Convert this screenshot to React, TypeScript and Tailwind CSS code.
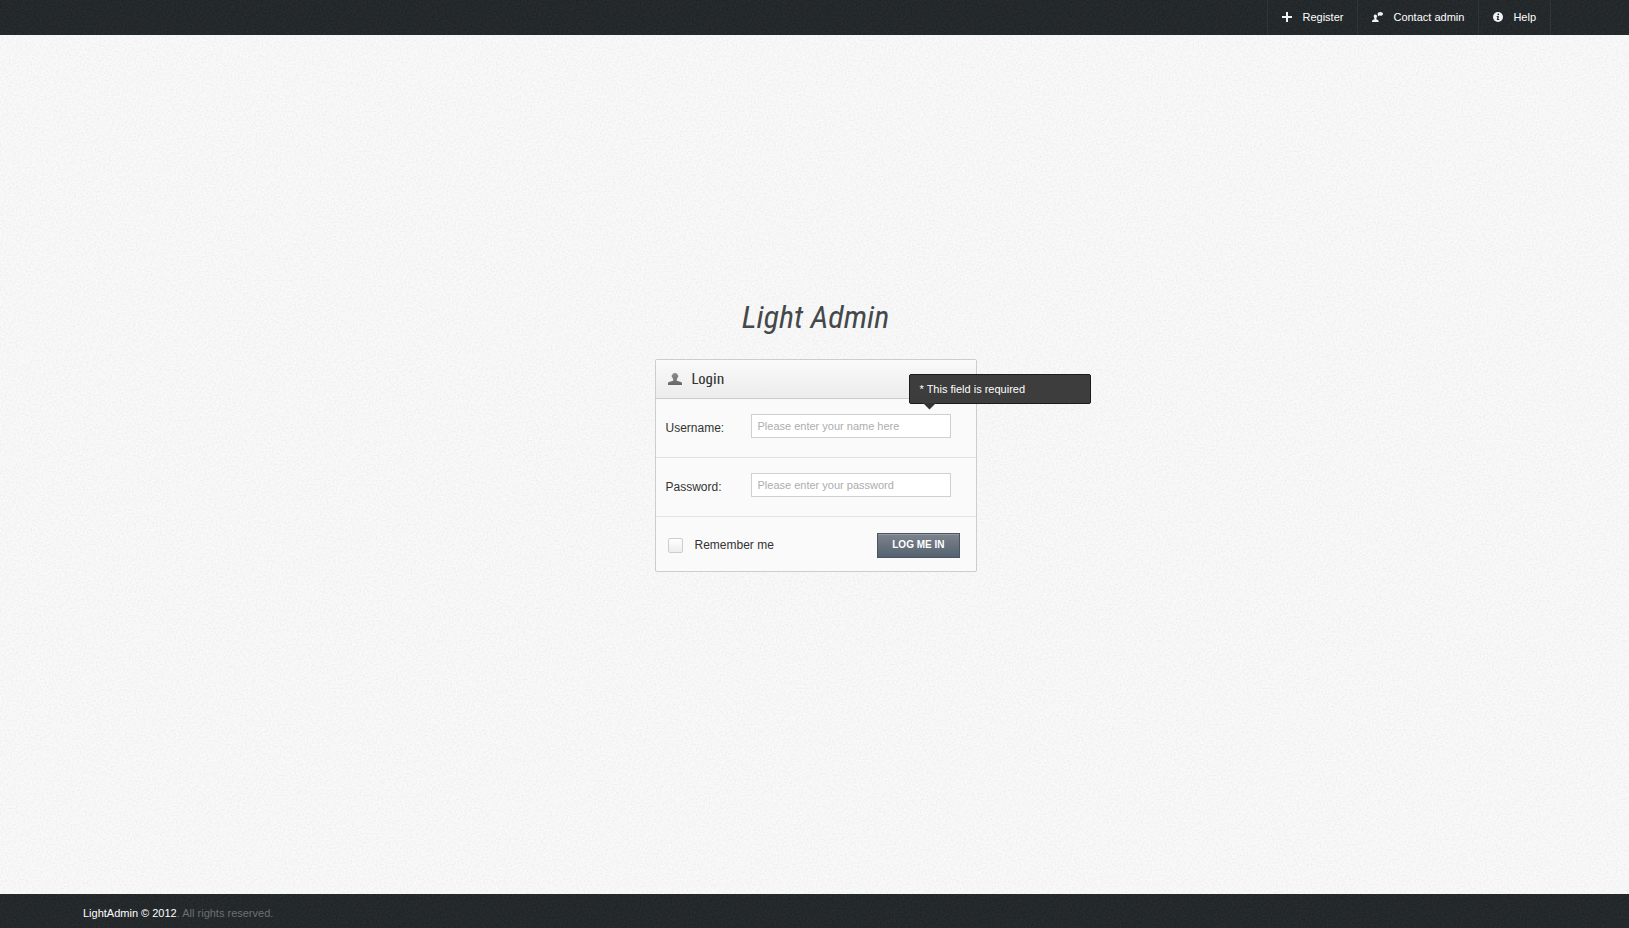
import type { ReactNode } from "react";

function Grain({ id, tone }: { id: string; tone: "light" | "dark" }) {
  const matrix =
    tone === "light"
      ? "0 0 0 0 0  0 0 0 0 0  0 0 0 0 0  0.09 0 0 0 -0.034"
      : "0 0 0 0 0  0 0 0 0 0  0 0 0 0 0  0.4 0 0 0 -0.12";
  return (
    <svg aria-hidden="true" className="pointer-events-none absolute inset-0 h-full w-full">
      <filter id={id} x="0" y="0" width="100%" height="100%">
        <feTurbulence type="fractalNoise" baseFrequency="0.55" numOctaves="2" stitchTiles="stitch" />
        <feColorMatrix type="matrix" values={matrix} />
      </filter>
      <rect width="100%" height="100%" filter={`url(#${id})`} />
    </svg>
  );
}

function PlusIcon() {
  return (
    <svg aria-hidden="true" width="10" height="10" viewBox="0 0 10 10" fill="#f2f2f2">
      <path d="M4 0h2v4h4v2H6v4H4V6H0V4h4z" />
    </svg>
  );
}

function ContactIcon() {
  return (
    <svg aria-hidden="true" width="11" height="10" viewBox="0 0 11 10" fill="#f2f2f2">
      <path d="M3.4 2.6c1.1 0 1.7.8 1.6 1.9-.1.8-.5 1.3-.6 1.7 0 .9 0 1.2.4 1.4 1.1.4 1.9.7 1.9 2.4H0C0 8.3.8 8 1.9 7.6c.5-.2.5-.5.5-1.4-.2-.4-.6-.9-.7-1.7-.1-1.1.6-1.9 1.7-1.9z" />
      <path d="M8.3 0C9.8 0 11 .8 11 1.9S9.8 3.7 8.3 3.7c-.4 0-.7 0-1-.1L5.7 4.6l.3-1.5C5.7 2.8 5.6 2.3 5.6 1.9 5.6.8 6.8 0 8.3 0z" />
    </svg>
  );
}

function InfoIcon() {
  return (
    <svg aria-hidden="true" width="10" height="10" viewBox="0 0 10 10">
      <circle cx="5" cy="5" r="5" fill="#f2f2f2" />
      <circle cx="5.3" cy="2.3" r="0.9" fill="#252a2d" />
      <path d="M3.7 4h2.2L5.4 7h.8v1H3.8l.6-3h-.7z" fill="#252a2d" />
    </svg>
  );
}

function UserIcon() {
  return (
    <svg aria-hidden="true" width="14" height="12" viewBox="0 0 14 12">
      <defs>
        <linearGradient id="userFill" x1="0" y1="0" x2="0" y2="1">
          <stop offset="0" stopColor="#8d8d8d" />
          <stop offset="1" stopColor="#666" />
        </linearGradient>
      </defs>
      <path
        fill="url(#userFill)"
        d="M7 0c1.5 0 2.6.8 2.7 2 .6.2.7.9.6 1.4-.1.5-.3.8-.6.9C9.5 5.3 9.1 6 8.7 6.4v1.2c.5.7 4.9.8 5.3 2.7V12H0v-1.7c.4-1.9 4.8-2 5.3-2.7V6.4C4.9 6 4.5 5.3 4.3 4.3c-.3-.1-.5-.4-.6-.9-.1-.5 0-1.2.6-1.4C4.4.8 5.5 0 7 0z"
      />
    </svg>
  );
}

function NavItem({ icon, children }: { icon: ReactNode; children: ReactNode }) {
  return (
    <li className="border-l border-[#2f3437] last:border-r">
      <a href="#" className="flex h-full items-center gap-2.5 px-3.5 pb-0.5 text-[11px] leading-4 text-white">
        {icon}
        {children}
      </a>
    </li>
  );
}

function Field({ id, label, type, hint, children }: { id: string; label: string; type: string; hint: string; children?: ReactNode }) {
  return (
    <div className="flex items-start border-b border-[#e2e2e2] pt-[15px] pr-[25px] pb-[19px] pl-2.5">
      <label htmlFor={id} className="w-[85px] pt-1 text-[12px] leading-5 text-[#333]">
        {label}
      </label>
      <div className="relative flex flex-1">
        <input
          id={id}
          type={type}
          placeholder={hint}
          className="h-6 w-full min-w-0 border border-[#d0d0d0] bg-white px-1.5 text-[11px] text-[#555] outline-none placeholder:text-[#adadad]"
        />
        {children}
      </div>
    </div>
  );
}

export default function App() {
  return (
    <div className="relative isolate flex min-h-screen flex-col overflow-hidden bg-[#f9f9f9] font-['Liberation_Sans',Arial,sans-serif]">
      <Grain id="paper" tone="light" />

      <header className="relative bg-[#272c2f]">
        <Grain id="topGrain" tone="dark" />
        <nav className="relative flex justify-end pr-[78px]">
          <ul className="flex h-[35px]">
            <NavItem icon={<PlusIcon />}>Register</NavItem>
            <NavItem icon={<ContactIcon />}>Contact admin</NavItem>
            <NavItem icon={<InfoIcon />}>Help</NavItem>
          </ul>
        </nav>
      </header>

      <main className="relative flex flex-1 flex-col items-center justify-center pb-[62px] pl-0.5">
        <h1 className="pb-5 font-['Segoe_Script','Bradley_Hand','Roboto_Condensed',Lato,cursive] text-[32px] leading-[44px] text-[#44484b] italic">
          Light Admin
        </h1>

        <form className="w-[322px] rounded-xs border border-[#cdcdcd] bg-[#fafafa]" onSubmit={(e) => e.preventDefault()}>
          <div className="flex h-[39px] items-center gap-2.5 border-b border-[#cdcdcd] bg-linear-to-b from-[#fafafa] to-[#ececec] px-3">
            <UserIcon />
            <h2 className="font-[Cuprum,'Roboto_Condensed',Roboto,sans-serif] text-[16px] leading-5 text-[#333]">Login</h2>
          </div>

          <Field id="username" label="Username:" type="text" hint="Please enter your name here">
            <div
              role="alert"
              className="absolute -top-10 left-[158px] flex h-[30px] w-[182px] items-center rounded-xs border border-[#1c1c1c] bg-[#333]/95 px-2.5 text-[11px] text-white"
            >
              * This field is required
              <svg aria-hidden="true" className="absolute top-full left-[13px]" width="13" height="7" viewBox="0 0 13 7">
                <path d="M0 0h13L6.5 6.5z" fill="#333" />
              </svg>
            </div>
          </Field>
          <Field id="password" label="Password:" type="password" hint="Please enter your password" />

          <div className="flex h-[54px] items-center justify-between pt-0.5 pr-4 pl-3">
            <label className="flex items-center gap-3 text-[12px] leading-5 text-[#333]">
              <input
                type="checkbox"
                className="size-[15px] appearance-none rounded-xs border border-[#cdcdcd] bg-linear-to-b from-white to-[#ededed]"
              />
              Remember me
            </label>
            <button
              type="submit"
              className="h-[25px] border border-[#4b5561] bg-linear-to-b from-[#7d838c] to-[#546270] px-3.5 text-[10px] leading-4 font-bold text-white uppercase shadow-[inset_0_1px_0_#9299a2]"
            >
              Log me in
            </button>
          </div>
        </form>
      </main>

      <footer className="relative bg-[#272c2f]">
        <Grain id="footGrain" tone="dark" />
        <p className="relative pt-[11px] pb-[7px] pl-[83px] text-[11px] leading-4 text-[#6c6f71]">
          <a href="#" className="text-white">
            LightAdmin © 2012
          </a>
          . All rights reserved.
        </p>
      </footer>
    </div>
  );
}
